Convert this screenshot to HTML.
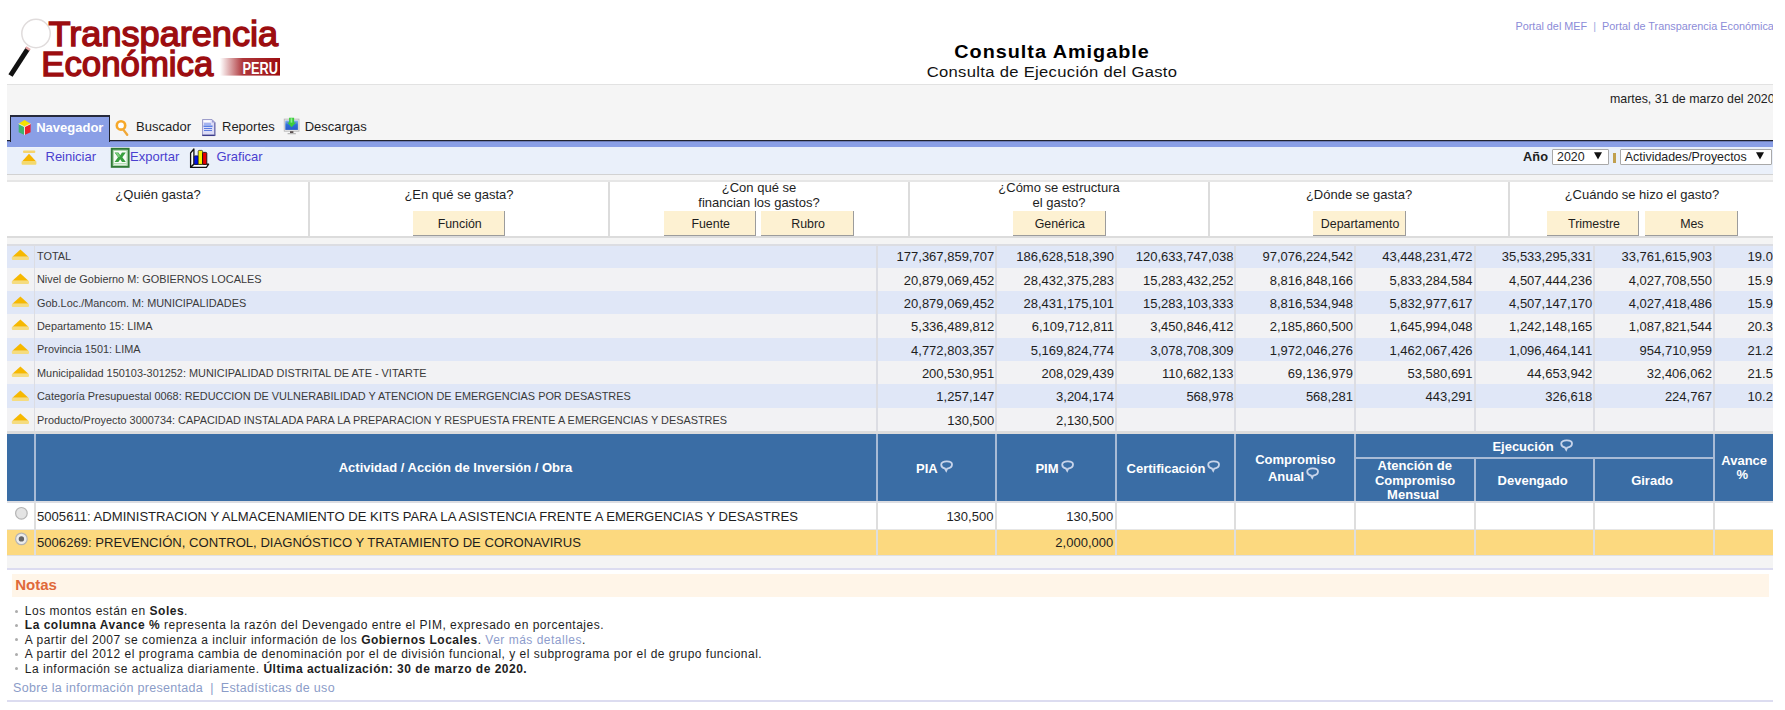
<!DOCTYPE html>
<html><head><meta charset="utf-8">
<style>
*{margin:0;padding:0;box-sizing:border-box}
html,body{width:1785px;height:710px;overflow:hidden;background:#fff;font-family:"Liberation Sans",sans-serif;color:#222}
#pg{position:absolute;left:0;top:0;width:1773px;height:710px;overflow:hidden}
.a{position:absolute}
.t,.r,.c{position:absolute;white-space:nowrap;line-height:1}
.r{text-align:right}
.c{text-align:center}
.btn{position:absolute;background:#fdf1d2;border-right:1px solid #9c9c9c;border-bottom:1px solid #9c9c9c}
b{font-weight:bold}
</style></head><body><div id="pg">
<svg class="a" style="left:0px;top:0px" width="300" height="84" viewBox="0 0 300 84">
 <defs><linearGradient id="pg1" x1="0" x2="1" y1="0" y2="0"><stop offset="0" stop-color="#a01318" stop-opacity="0"/><stop offset="0.38" stop-color="#a01318" stop-opacity="0.85"/><stop offset="1" stop-color="#9c0d10"/></linearGradient></defs>
 <circle cx="36" cy="33.5" r="14.2" fill="#fff" stroke="#e0dcdc" stroke-width="1.5"/>
 <line x1="28" y1="48.5" x2="10.5" y2="75.5" stroke="#111" stroke-width="5"/>
 <line x1="28.6" y1="47.6" x2="27.3" y2="49.6" stroke="#e6a4a4" stroke-width="5"/>
 <text x="48.6" y="46.1" font-family="Liberation Sans" font-size="34.4" fill="#9c0d10" stroke="#9c0d10" stroke-width="1.4" textLength="229.5" lengthAdjust="spacingAndGlyphs">Transparencia</text>
 <text x="41.3" y="75.5" font-family="Liberation Sans" font-size="34.2" fill="#9c0d10" stroke="#9c0d10" stroke-width="1.4" textLength="172" lengthAdjust="spacingAndGlyphs">Económica</text>
 <rect x="220" y="58" width="60" height="17.6" fill="url(#pg1)"/>
 <text x="242.5" y="73.5" font-family="Liberation Sans" font-weight="bold" font-size="16" fill="#fff" textLength="35.5" lengthAdjust="spacingAndGlyphs">PERU</text>
</svg>
<div class="c" style="left:852.00px;top:42.86px;width:400px;font-size:18px;font-weight:bold;color:#000;letter-spacing:0.9px;transform:scaleX(1.1)">Consulta Amigable</div>
<div class="c" style="left:852.00px;top:63.98px;width:400px;font-size:15.5px;color:#111;letter-spacing:0.3px;transform:scaleX(1.07)">Consulta de Ejecuci&oacute;n del Gasto</div>
<div class="t" style="left:1515.50px;top:20.82px;font-size:10.85px;color:#8c8cd8">Portal del MEF&nbsp; <span style="color:#9aa6e0">|</span>&nbsp; Portal de Transparencia Econ&oacute;mica</div>
<div class="a" style="left:7px;top:84px;width:1766px;height:56px;background:#f5f5f5;border-top:1px solid #e2e2e2"></div>
<div class="t" style="left:1610.00px;top:93.20px;font-size:12.4px;color:#222">martes, 31 de marzo del 2020</div>
<div class="a" style="left:7px;top:140px;width:1766px;height:1px;background:#20222e"></div>
<div class="a" style="left:7px;top:141px;width:1766px;height:1px;background:#6c7cb8"></div>
<div class="a" style="left:7px;top:142px;width:1766px;height:5px;background:#8a9fe6"></div>
<div class="a" style="left:10px;top:115px;width:100px;height:27px;background:#8a9fe6;border:1px solid #20222e;border-top:2px solid #262a3c;border-bottom:none"></div>
<div class="a" style="left:11px;top:139px;width:98px;height:9px;background:#8a9fe6"></div>
<div class="a" style="left:7px;top:147px;width:1766px;height:28px;background:#eaf0fa;border-bottom:1px solid #d2d2d2"></div>
<div class="a" style="left:16px;top:147px;width:249px;height:1px;background:#eff3fb"></div>
<div class="t" style="left:36.20px;top:121.10px;font-size:13px;font-weight:bold;color:#fff">Navegador</div>
<div class="t" style="left:136.10px;top:120.20px;font-size:13px;color:#1e1e1e">Buscador</div>
<div class="t" style="left:222.00px;top:120.20px;font-size:13px;color:#1e1e1e">Reportes</div>
<div class="t" style="left:304.70px;top:120.20px;font-size:13px;color:#1e1e1e">Descargas</div>
<div class="t" style="left:45.50px;top:149.80px;font-size:13px;color:#4a40cf">Reiniciar</div>
<div class="t" style="left:130.10px;top:149.80px;font-size:13px;color:#4a40cf">Exportar</div>
<div class="t" style="left:216.40px;top:149.80px;font-size:13px;color:#4a40cf">Graficar</div>
<svg class="a" style="left:16px;top:118px" width="18" height="19" viewBox="0 0 18 19">
<polygon points="8.5,2 14.6,5.8 8.5,8.8 2.7,5.8" fill="#f4e000"/>
<polygon points="2.7,5.8 8.5,8.8 8.5,17.1 2.7,14.2" fill="#3db46d"/>
<polygon points="14.6,5.8 8.5,8.8 8.5,17.1 14.6,14.2" fill="#ea1f2a"/>
<polyline points="2.7,5.8 8.5,8.8 14.6,5.8" fill="none" stroke="#fff" stroke-width="0.8"/>
<line x1="8.5" y1="8.8" x2="8.5" y2="17.1" stroke="#fff" stroke-width="0.8"/>
</svg>
<svg class="a" style="left:112px;top:118px" width="20" height="20" viewBox="0 0 20 20">
<circle cx="9" cy="7.4" r="4.2" fill="#fff" stroke="#f6a82a" stroke-width="2.6"/>
<line x1="11.3" y1="11.6" x2="15.2" y2="16.8" stroke="#f0a838" stroke-width="2.4" stroke-linecap="round"/>
</svg>
<svg class="a" style="left:200px;top:117px" width="18" height="20" viewBox="0 0 18 20">
<path d="M2.5,2.5 H12 L15,5.5 V18.6 H2.5 Z" fill="#dcdcf6" stroke="#8a8ac0" stroke-width="0.8"/>
<path d="M12,2.5 V5.5 H15" fill="#9a9ad0"/>
<rect x="2.3" y="17.6" width="12.9" height="1.4" fill="#3c3c8a"/>
<rect x="14.2" y="5.5" width="1.1" height="13" fill="#6a6aa8"/>
<rect x="3.5" y="3.3" width="7" height="1.6" fill="#fff"/>
<rect x="4" y="6.5" width="7" height="1" fill="#6a8ae8"/>
<rect x="3.5" y="8.6" width="9" height="1.2" fill="#3a6ae0"/>
<rect x="4" y="11" width="8" height="1" fill="#5a7ae0"/>
<rect x="4" y="13" width="8" height="1" fill="#5a7ae0"/>
</svg>
<svg class="a" style="left:282px;top:116px" width="20" height="20" viewBox="0 0 20 20">
<defs><linearGradient id="scr" x1="0" x2="0" y1="0" y2="1"><stop offset="0" stop-color="#8ab4f0"/><stop offset="0.45" stop-color="#2f6fd8"/><stop offset="1" stop-color="#2a5cc8"/></linearGradient></defs>
<rect x="2.2" y="3.1" width="14.8" height="12.1" fill="#ececec" stroke="#b4b4b4" stroke-width="0.8"/>
<rect x="3.3" y="4.5" width="12.6" height="9.4" fill="url(#scr)"/>
<rect x="8" y="15.2" width="3.4" height="1.8" fill="#5a5050"/>
<rect x="5.6" y="17" width="8.2" height="1.3" fill="#b8b8b8"/>
<path d="M7.1,1.8 H12.1 V6.6 H14.1 L9.6,11.2 L5.2,6.6 H7.1 Z" fill="#3ccc3c"/>
<rect x="8.6" y="2.2" width="1.7" height="4.4" fill="#90f090"/>
</svg>
<svg class="a" style="left:18px;top:148px" width="22" height="20" viewBox="0 0 22 20">
<rect x="5" y="2.6" width="12.3" height="2.3" rx="1" fill="#f6d46c"/>
<polygon points="11,5.8 17.7,13 4.5,13" fill="#f6b400"/>
<rect x="3.6" y="13" width="14.8" height="3.7" rx="0.8" fill="#f4d96e"/>
</svg>
<svg class="a" style="left:109px;top:146px" width="22" height="23" viewBox="0 0 22 23">
<rect x="2.8" y="2.8" width="16.8" height="18" fill="#e4f2e4" stroke="#2f7a35" stroke-width="2"/>
<rect x="4.4" y="4.4" width="13.6" height="14.8" fill="#f8fcf8" stroke="#9ccc9c" stroke-width="0.8"/>
<path d="M5.6,6.4 L9.4,6.4 L11.2,9.2 L13,6.4 L16.8,6.4 L13.4,11.2 L16.8,16 L13,16 L11.2,13.2 L9.4,16 L5.6,16 L9,11.2 Z" fill="#39a040"/>
<path d="M6.6,7 L9,7 L11.2,10.2 L9.4,11.2 Z" fill="#7ccf7c"/>
<line x1="5" y1="17.6" x2="17.5" y2="17.6" stroke="#a8d8a8" stroke-width="0.9"/>
</svg>
<svg class="a" style="left:188px;top:146px" width="22" height="23" viewBox="0 0 22 23">
<path d="M2.6,7 L5.9,3 L5.9,18.2 L2.6,21.4 Z" fill="#fff" stroke="#111" stroke-width="1.3" stroke-linejoin="round"/>
<path d="M2.6,21.4 L5.9,18.2 L20.6,18.2 L18.4,21.4 Z" fill="#fff" stroke="#111" stroke-width="1.3" stroke-linejoin="round"/>
<rect x="6.2" y="9.8" width="4.2" height="8.6" rx="1" fill="#0010e8" stroke="#111" stroke-width="0.6"/>
<rect x="10.2" y="4.4" width="4.4" height="14" rx="1" fill="#f4f000" stroke="#111" stroke-width="0.7"/>
<rect x="14.6" y="6.4" width="4.2" height="12" rx="1" fill="#e80000" stroke="#111" stroke-width="0.9"/>
</svg>
<div class="t" style="left:1523.10px;top:150.76px;font-size:12.8px;font-weight:bold;color:#1e1e1e">A&ntilde;o</div>
<div class="a" style="left:1552px;top:149px;width:57px;height:16px;background:#fff;border:1px solid #a9a9a9;border-radius:1px"></div>
<div class="t" style="left:1557.00px;top:151.10px;font-size:12.4px;color:#1e1e1e">2020</div>
<svg class="a" style="left:1593px;top:151px" width="10" height="10" viewBox="0 0 10 10"><polygon points="1,1.2 9,1.2 5,8.4" fill="#111"/></svg>
<div class="a" style="left:1613px;top:153px;width:3px;height:10px;background:#c0a050"></div>
<div class="a" style="left:1620px;top:149px;width:152px;height:16px;background:#fff;border:1px solid #a9a9a9;border-radius:1px"></div>
<div class="t" style="left:1624.80px;top:151.10px;font-size:12.4px;color:#1e1e1e">Actividades/Proyectos</div>
<svg class="a" style="left:1755.2px;top:151px" width="10" height="10" viewBox="0 0 10 10"><polygon points="1,1.2 9,1.2 5,8.4" fill="#111"/></svg>
<div class="a" style="left:7px;top:175px;width:1766px;height:69px;background:#f4f4f4"></div>
<div class="a" style="left:7px;top:180px;width:1766px;height:58px;background:#fff;border-top:2px solid #e6e6e6;border-bottom:2px solid #dcdcdc"></div>
<div class="a" style="left:308px;top:182px;width:2px;height:54px;background:#dcdcdc"></div>
<div class="a" style="left:608px;top:182px;width:2px;height:54px;background:#dcdcdc"></div>
<div class="a" style="left:908px;top:182px;width:2px;height:54px;background:#dcdcdc"></div>
<div class="a" style="left:1208px;top:182px;width:2px;height:54px;background:#dcdcdc"></div>
<div class="a" style="left:1508px;top:182px;width:2px;height:54px;background:#dcdcdc"></div>
<div class="c" style="left:-42.00px;top:188.40px;width:400px;font-size:13px;color:#1e1e1e">&iquest;Qui&eacute;n gasta?</div>
<div class="c" style="left:259.00px;top:188.40px;width:400px;font-size:13px;color:#1e1e1e">&iquest;En qu&eacute; se gasta?</div>
<div class="c" style="left:559.00px;top:181.40px;width:400px;font-size:13px;color:#1e1e1e">&iquest;Con qu&eacute; se</div>
<div class="c" style="left:559.00px;top:195.90px;width:400px;font-size:13px;color:#1e1e1e">financian los gastos?</div>
<div class="c" style="left:859.00px;top:181.40px;width:400px;font-size:13px;color:#1e1e1e">&iquest;C&oacute;mo se estructura</div>
<div class="c" style="left:859.00px;top:195.90px;width:400px;font-size:13px;color:#1e1e1e">el gasto?</div>
<div class="c" style="left:1159.00px;top:188.40px;width:400px;font-size:13px;color:#1e1e1e">&iquest;D&oacute;nde se gasta?</div>
<div class="c" style="left:1442.00px;top:188.40px;width:400px;font-size:13px;color:#1e1e1e">&iquest;Cu&aacute;ndo se hizo el gasto?</div>
<div class="a" style="left:413px;top:211px;width:92px;height:25px;background:#fdf1d2;border-right:1px solid #9c9c9c;border-bottom:1px solid #9c9c9c"></div>
<div class="c" style="left:399.70px;top:218.30px;width:120px;font-size:12.4px;color:#1e1e1e">Funci&oacute;n</div>
<div class="a" style="left:664px;top:211px;width:92px;height:25px;background:#fdf1d2;border-right:1px solid #9c9c9c;border-bottom:1px solid #9c9c9c"></div>
<div class="c" style="left:650.70px;top:218.30px;width:120px;font-size:12.4px;color:#1e1e1e">Fuente</div>
<div class="a" style="left:761px;top:211px;width:93px;height:25px;background:#fdf1d2;border-right:1px solid #9c9c9c;border-bottom:1px solid #9c9c9c"></div>
<div class="c" style="left:748.15px;top:218.30px;width:120px;font-size:12.4px;color:#1e1e1e">Rubro</div>
<div class="a" style="left:1013px;top:211px;width:93px;height:25px;background:#fdf1d2;border-right:1px solid #9c9c9c;border-bottom:1px solid #9c9c9c"></div>
<div class="c" style="left:999.85px;top:218.30px;width:120px;font-size:12.4px;color:#1e1e1e">Gen&eacute;rica</div>
<div class="a" style="left:1313px;top:211px;width:93px;height:25px;background:#fdf1d2;border-right:1px solid #9c9c9c;border-bottom:1px solid #9c9c9c"></div>
<div class="c" style="left:1300.10px;top:218.30px;width:120px;font-size:12.4px;color:#1e1e1e">Departamento</div>
<div class="a" style="left:1547px;top:211px;width:92px;height:25px;background:#fdf1d2;border-right:1px solid #9c9c9c;border-bottom:1px solid #9c9c9c"></div>
<div class="c" style="left:1534.00px;top:218.30px;width:120px;font-size:12.4px;color:#1e1e1e">Trimestre</div>
<div class="a" style="left:1645px;top:211px;width:93px;height:25px;background:#fdf1d2;border-right:1px solid #9c9c9c;border-bottom:1px solid #9c9c9c"></div>
<div class="c" style="left:1631.85px;top:218.30px;width:120px;font-size:12.4px;color:#1e1e1e">Mes</div>
<div class="a" style="left:7px;top:244px;width:1766px;height:24px;background:#e0e7f7"></div>
<div class="a" style="left:7px;top:268px;width:1766px;height:23px;background:#f2f2f4"></div>
<div class="a" style="left:7px;top:291px;width:1766px;height:23px;background:#e0e7f7"></div>
<div class="a" style="left:7px;top:314px;width:1766px;height:24px;background:#f2f2f4"></div>
<div class="a" style="left:7px;top:338px;width:1766px;height:23px;background:#e0e7f7"></div>
<div class="a" style="left:7px;top:361px;width:1766px;height:23px;background:#f2f2f4"></div>
<div class="a" style="left:7px;top:384px;width:1766px;height:24px;background:#e0e7f7"></div>
<div class="a" style="left:7px;top:408px;width:1766px;height:23px;background:#f2f2f4"></div>
<div class="t" style="left:37.00px;top:251.13px;font-size:10.9px;color:#3a3a3a">TOTAL</div>
<div class="r" style="left:876.20px;top:250.16px;width:118px;font-size:13.0px;color:#1e1e1e">177,367,859,707</div>
<div class="r" style="left:995.90px;top:250.16px;width:118px;font-size:13.0px;color:#1e1e1e">186,628,518,390</div>
<div class="r" style="left:1115.40px;top:250.16px;width:118px;font-size:13.0px;color:#1e1e1e">120,633,747,038</div>
<div class="r" style="left:1234.90px;top:250.16px;width:118px;font-size:13.0px;color:#1e1e1e">97,076,224,542</div>
<div class="r" style="left:1354.60px;top:250.16px;width:118px;font-size:13.0px;color:#1e1e1e">43,448,231,472</div>
<div class="r" style="left:1474.20px;top:250.16px;width:118px;font-size:13.0px;color:#1e1e1e">35,533,295,331</div>
<div class="r" style="left:1593.90px;top:250.16px;width:118px;font-size:13.0px;color:#1e1e1e">33,761,615,903</div>
<div class="r" style="left:1654.90px;top:250.16px;width:118px;font-size:13.0px;color:#1e1e1e">19.0</div>
<div class="t" style="left:37.00px;top:274.47px;font-size:10.9px;color:#3a3a3a">Nivel de Gobierno M: GOBIERNOS LOCALES</div>
<div class="r" style="left:876.20px;top:273.50px;width:118px;font-size:13.0px;color:#1e1e1e">20,879,069,452</div>
<div class="r" style="left:995.90px;top:273.50px;width:118px;font-size:13.0px;color:#1e1e1e">28,432,375,283</div>
<div class="r" style="left:1115.40px;top:273.50px;width:118px;font-size:13.0px;color:#1e1e1e">15,283,432,252</div>
<div class="r" style="left:1234.90px;top:273.50px;width:118px;font-size:13.0px;color:#1e1e1e">8,816,848,166</div>
<div class="r" style="left:1354.60px;top:273.50px;width:118px;font-size:13.0px;color:#1e1e1e">5,833,284,584</div>
<div class="r" style="left:1474.20px;top:273.50px;width:118px;font-size:13.0px;color:#1e1e1e">4,507,444,236</div>
<div class="r" style="left:1593.90px;top:273.50px;width:118px;font-size:13.0px;color:#1e1e1e">4,027,708,550</div>
<div class="r" style="left:1654.90px;top:273.50px;width:118px;font-size:13.0px;color:#1e1e1e">15.9</div>
<div class="t" style="left:37.00px;top:297.81px;font-size:10.9px;color:#3a3a3a">Gob.Loc./Mancom. M: MUNICIPALIDADES</div>
<div class="r" style="left:876.20px;top:296.84px;width:118px;font-size:13.0px;color:#1e1e1e">20,879,069,452</div>
<div class="r" style="left:995.90px;top:296.84px;width:118px;font-size:13.0px;color:#1e1e1e">28,431,175,101</div>
<div class="r" style="left:1115.40px;top:296.84px;width:118px;font-size:13.0px;color:#1e1e1e">15,283,103,333</div>
<div class="r" style="left:1234.90px;top:296.84px;width:118px;font-size:13.0px;color:#1e1e1e">8,816,534,948</div>
<div class="r" style="left:1354.60px;top:296.84px;width:118px;font-size:13.0px;color:#1e1e1e">5,832,977,617</div>
<div class="r" style="left:1474.20px;top:296.84px;width:118px;font-size:13.0px;color:#1e1e1e">4,507,147,170</div>
<div class="r" style="left:1593.90px;top:296.84px;width:118px;font-size:13.0px;color:#1e1e1e">4,027,418,486</div>
<div class="r" style="left:1654.90px;top:296.84px;width:118px;font-size:13.0px;color:#1e1e1e">15.9</div>
<div class="t" style="left:37.00px;top:321.15px;font-size:10.9px;color:#3a3a3a">Departamento 15: LIMA</div>
<div class="r" style="left:876.20px;top:320.18px;width:118px;font-size:13.0px;color:#1e1e1e">5,336,489,812</div>
<div class="r" style="left:995.90px;top:320.18px;width:118px;font-size:13.0px;color:#1e1e1e">6,109,712,811</div>
<div class="r" style="left:1115.40px;top:320.18px;width:118px;font-size:13.0px;color:#1e1e1e">3,450,846,412</div>
<div class="r" style="left:1234.90px;top:320.18px;width:118px;font-size:13.0px;color:#1e1e1e">2,185,860,500</div>
<div class="r" style="left:1354.60px;top:320.18px;width:118px;font-size:13.0px;color:#1e1e1e">1,645,994,048</div>
<div class="r" style="left:1474.20px;top:320.18px;width:118px;font-size:13.0px;color:#1e1e1e">1,242,148,165</div>
<div class="r" style="left:1593.90px;top:320.18px;width:118px;font-size:13.0px;color:#1e1e1e">1,087,821,544</div>
<div class="r" style="left:1654.90px;top:320.18px;width:118px;font-size:13.0px;color:#1e1e1e">20.3</div>
<div class="t" style="left:37.00px;top:344.49px;font-size:10.9px;color:#3a3a3a">Provincia 1501: LIMA</div>
<div class="r" style="left:876.20px;top:343.52px;width:118px;font-size:13.0px;color:#1e1e1e">4,772,803,357</div>
<div class="r" style="left:995.90px;top:343.52px;width:118px;font-size:13.0px;color:#1e1e1e">5,169,824,774</div>
<div class="r" style="left:1115.40px;top:343.52px;width:118px;font-size:13.0px;color:#1e1e1e">3,078,708,309</div>
<div class="r" style="left:1234.90px;top:343.52px;width:118px;font-size:13.0px;color:#1e1e1e">1,972,046,276</div>
<div class="r" style="left:1354.60px;top:343.52px;width:118px;font-size:13.0px;color:#1e1e1e">1,462,067,426</div>
<div class="r" style="left:1474.20px;top:343.52px;width:118px;font-size:13.0px;color:#1e1e1e">1,096,464,141</div>
<div class="r" style="left:1593.90px;top:343.52px;width:118px;font-size:13.0px;color:#1e1e1e">954,710,959</div>
<div class="r" style="left:1654.90px;top:343.52px;width:118px;font-size:13.0px;color:#1e1e1e">21.2</div>
<div class="t" style="left:37.00px;top:367.83px;font-size:10.9px;color:#3a3a3a">Municipalidad 150103-301252: MUNICIPALIDAD DISTRITAL DE ATE - VITARTE</div>
<div class="r" style="left:876.20px;top:366.86px;width:118px;font-size:13.0px;color:#1e1e1e">200,530,951</div>
<div class="r" style="left:995.90px;top:366.86px;width:118px;font-size:13.0px;color:#1e1e1e">208,029,439</div>
<div class="r" style="left:1115.40px;top:366.86px;width:118px;font-size:13.0px;color:#1e1e1e">110,682,133</div>
<div class="r" style="left:1234.90px;top:366.86px;width:118px;font-size:13.0px;color:#1e1e1e">69,136,979</div>
<div class="r" style="left:1354.60px;top:366.86px;width:118px;font-size:13.0px;color:#1e1e1e">53,580,691</div>
<div class="r" style="left:1474.20px;top:366.86px;width:118px;font-size:13.0px;color:#1e1e1e">44,653,942</div>
<div class="r" style="left:1593.90px;top:366.86px;width:118px;font-size:13.0px;color:#1e1e1e">32,406,062</div>
<div class="r" style="left:1654.90px;top:366.86px;width:118px;font-size:13.0px;color:#1e1e1e">21.5</div>
<div class="t" style="left:37.00px;top:391.17px;font-size:10.9px;color:#3a3a3a">Categor&iacute;a Presupuestal 0068: REDUCCION DE VULNERABILIDAD Y ATENCION DE EMERGENCIAS POR DESASTRES</div>
<div class="r" style="left:876.20px;top:390.20px;width:118px;font-size:13.0px;color:#1e1e1e">1,257,147</div>
<div class="r" style="left:995.90px;top:390.20px;width:118px;font-size:13.0px;color:#1e1e1e">3,204,174</div>
<div class="r" style="left:1115.40px;top:390.20px;width:118px;font-size:13.0px;color:#1e1e1e">568,978</div>
<div class="r" style="left:1234.90px;top:390.20px;width:118px;font-size:13.0px;color:#1e1e1e">568,281</div>
<div class="r" style="left:1354.60px;top:390.20px;width:118px;font-size:13.0px;color:#1e1e1e">443,291</div>
<div class="r" style="left:1474.20px;top:390.20px;width:118px;font-size:13.0px;color:#1e1e1e">326,618</div>
<div class="r" style="left:1593.90px;top:390.20px;width:118px;font-size:13.0px;color:#1e1e1e">224,767</div>
<div class="r" style="left:1654.90px;top:390.20px;width:118px;font-size:13.0px;color:#1e1e1e">10.2</div>
<div class="t" style="left:37.00px;top:414.51px;font-size:10.9px;color:#3a3a3a">Producto/Proyecto 3000734: CAPACIDAD INSTALADA PARA LA PREPARACION Y RESPUESTA FRENTE A EMERGENCIAS Y DESASTRES</div>
<div class="r" style="left:876.20px;top:413.54px;width:118px;font-size:13.0px;color:#1e1e1e">130,500</div>
<div class="r" style="left:995.90px;top:413.54px;width:118px;font-size:13.0px;color:#1e1e1e">2,130,500</div>
<div class="a" style="left:34px;top:244px;width:1px;height:187px;background:#dcdde3"></div>
<div class="a" style="left:876px;top:244px;width:2px;height:187px;background:#dcdde3"></div>
<div class="a" style="left:995px;top:244px;width:2px;height:187px;background:#dcdde3"></div>
<div class="a" style="left:1115px;top:244px;width:2px;height:187px;background:#dcdde3"></div>
<div class="a" style="left:1234px;top:244px;width:2px;height:187px;background:#dcdde3"></div>
<div class="a" style="left:1354px;top:244px;width:2px;height:187px;background:#dcdde3"></div>
<div class="a" style="left:1474px;top:244px;width:2px;height:187px;background:#dcdde3"></div>
<div class="a" style="left:1593px;top:244px;width:2px;height:187px;background:#dcdde3"></div>
<div class="a" style="left:1713px;top:244px;width:2px;height:187px;background:#dcdde3"></div>
<svg class="a" style="left:11px;top:244.46px" width="19" height="18" viewBox="0 0 19 18"><polygon points="9.4,5.6 17.4,12.8 1.4,12.8" fill="#f6b800"/><rect x="0.8" y="12.8" width="17.2" height="3.2" rx="1" fill="#f5dc80"/></svg>
<svg class="a" style="left:11px;top:267.8px" width="19" height="18" viewBox="0 0 19 18"><polygon points="9.4,5.6 17.4,12.8 1.4,12.8" fill="#f6b800"/><rect x="0.8" y="12.8" width="17.2" height="3.2" rx="1" fill="#f5dc80"/></svg>
<svg class="a" style="left:11px;top:291.14px" width="19" height="18" viewBox="0 0 19 18"><polygon points="9.4,5.6 17.4,12.8 1.4,12.8" fill="#f6b800"/><rect x="0.8" y="12.8" width="17.2" height="3.2" rx="1" fill="#f5dc80"/></svg>
<svg class="a" style="left:11px;top:314.48px" width="19" height="18" viewBox="0 0 19 18"><polygon points="9.4,5.6 17.4,12.8 1.4,12.8" fill="#f6b800"/><rect x="0.8" y="12.8" width="17.2" height="3.2" rx="1" fill="#f5dc80"/></svg>
<svg class="a" style="left:11px;top:337.82px" width="19" height="18" viewBox="0 0 19 18"><polygon points="9.4,5.6 17.4,12.8 1.4,12.8" fill="#f6b800"/><rect x="0.8" y="12.8" width="17.2" height="3.2" rx="1" fill="#f5dc80"/></svg>
<svg class="a" style="left:11px;top:361.16px" width="19" height="18" viewBox="0 0 19 18"><polygon points="9.4,5.6 17.4,12.8 1.4,12.8" fill="#f6b800"/><rect x="0.8" y="12.8" width="17.2" height="3.2" rx="1" fill="#f5dc80"/></svg>
<svg class="a" style="left:11px;top:384.5px" width="19" height="18" viewBox="0 0 19 18"><polygon points="9.4,5.6 17.4,12.8 1.4,12.8" fill="#f6b800"/><rect x="0.8" y="12.8" width="17.2" height="3.2" rx="1" fill="#f5dc80"/></svg>
<svg class="a" style="left:11px;top:407.84px" width="19" height="18" viewBox="0 0 19 18"><polygon points="9.4,5.6 17.4,12.8 1.4,12.8" fill="#f6b800"/><rect x="0.8" y="12.8" width="17.2" height="3.2" rx="1" fill="#f5dc80"/></svg>
<div class="a" style="left:7px;top:431px;width:1766px;height:3px;background:#dcdcdc"></div>
<div class="a" style="left:7px;top:244px;width:1766px;height:2px;background:#dcdde2"></div>
<div class="a" style="left:7px;top:434px;width:1766px;height:67px;background:#3a6da5"></div>
<div class="a" style="left:34px;top:434px;width:2px;height:67px;background:#a8bbd6"></div>
<div class="a" style="left:876px;top:434px;width:2px;height:67px;background:#a8bbd6"></div>
<div class="a" style="left:995px;top:434px;width:2px;height:67px;background:#a8bbd6"></div>
<div class="a" style="left:1115px;top:434px;width:2px;height:67px;background:#a8bbd6"></div>
<div class="a" style="left:1234px;top:434px;width:2px;height:67px;background:#a8bbd6"></div>
<div class="a" style="left:1354px;top:434px;width:2px;height:67px;background:#a8bbd6"></div>
<div class="a" style="left:1474px;top:459px;width:2px;height:42px;background:#a8bbd6"></div>
<div class="a" style="left:1593px;top:459px;width:2px;height:42px;background:#a8bbd6"></div>
<div class="a" style="left:1713px;top:434px;width:2px;height:67px;background:#a8bbd6"></div>
<div class="a" style="left:1355px;top:457px;width:359px;height:2px;background:#a8bbd6"></div>
<div class="c" style="left:255.50px;top:461.00px;width:400px;font-size:13px;font-weight:bold;color:#fff">Actividad / Acci&oacute;n de Inversi&oacute;n / Obra</div>
<div class="t" style="left:916.00px;top:462.20px;font-size:13px;font-weight:bold;color:#fff">PIA</div>
<svg class="a" style="left:938.8px;top:459.4px" width="15" height="14" viewBox="0 0 15 14"><path d="M2.2,5.6 C2,1.6 12.6,1.2 13,5.2 C13.2,8.4 10.2,9.2 8.2,9.6 L7.2,11.8 L5.8,9.4 C3.6,9 2.3,8 2.2,5.6 Z" fill="none" stroke="#c8d4ea" stroke-width="1.8"/></svg>
<div class="t" style="left:1035.40px;top:462.20px;font-size:13px;font-weight:bold;color:#fff">PIM</div>
<svg class="a" style="left:1059.8px;top:459.4px" width="15" height="14" viewBox="0 0 15 14"><path d="M2.2,5.6 C2,1.6 12.6,1.2 13,5.2 C13.2,8.4 10.2,9.2 8.2,9.6 L7.2,11.8 L5.8,9.4 C3.6,9 2.3,8 2.2,5.6 Z" fill="none" stroke="#c8d4ea" stroke-width="1.8"/></svg>
<div class="t" style="left:1126.60px;top:462.20px;font-size:13px;font-weight:bold;color:#fff">Certificaci&oacute;n</div>
<svg class="a" style="left:1206.1px;top:459.4px" width="15" height="14" viewBox="0 0 15 14"><path d="M2.2,5.6 C2,1.6 12.6,1.2 13,5.2 C13.2,8.4 10.2,9.2 8.2,9.6 L7.2,11.8 L5.8,9.4 C3.6,9 2.3,8 2.2,5.6 Z" fill="none" stroke="#c8d4ea" stroke-width="1.8"/></svg>
<div class="c" style="left:1195.30px;top:453.20px;width:200px;font-size:13px;font-weight:bold;color:#fff">Compromiso</div>
<div class="c" style="left:1186.00px;top:470.20px;width:200px;font-size:13px;font-weight:bold;color:#fff">Anual</div>
<svg class="a" style="left:1305.3px;top:465.8px" width="15" height="14" viewBox="0 0 15 14"><path d="M2.2,5.6 C2,1.6 12.6,1.2 13,5.2 C13.2,8.4 10.2,9.2 8.2,9.6 L7.2,11.8 L5.8,9.4 C3.6,9 2.3,8 2.2,5.6 Z" fill="none" stroke="#c8d4ea" stroke-width="1.8"/></svg>
<div class="c" style="left:1423.10px;top:440.00px;width:200px;font-size:13px;font-weight:bold;color:#fff">Ejecuci&oacute;n</div>
<svg class="a" style="left:1558.8px;top:437.8px" width="15" height="14" viewBox="0 0 15 14"><path d="M2.2,5.6 C2,1.6 12.6,1.2 13,5.2 C13.2,8.4 10.2,9.2 8.2,9.6 L7.2,11.8 L5.8,9.4 C3.6,9 2.3,8 2.2,5.6 Z" fill="none" stroke="#c8d4ea" stroke-width="1.8"/></svg>
<div class="c" style="left:1314.80px;top:459.40px;width:200px;font-size:13px;font-weight:bold;color:#fff">Atenci&oacute;n de</div>
<div class="c" style="left:1315.00px;top:473.90px;width:200px;font-size:13px;font-weight:bold;color:#fff">Compromiso</div>
<div class="c" style="left:1313.10px;top:487.90px;width:200px;font-size:13px;font-weight:bold;color:#fff">Mensual</div>
<div class="c" style="left:1432.60px;top:473.90px;width:200px;font-size:13px;font-weight:bold;color:#fff">Devengado</div>
<div class="c" style="left:1552.10px;top:473.90px;width:200px;font-size:13px;font-weight:bold;color:#fff">Girado</div>
<div class="c" style="left:1644.20px;top:454.30px;width:200px;font-size:13px;font-weight:bold;color:#fff">Avance</div>
<div class="c" style="left:1642.30px;top:468.00px;width:200px;font-size:13px;font-weight:bold;color:#fff">%</div>
<div class="a" style="left:7px;top:501px;width:1766px;height:28px;background:#fff;border-top:2px solid #dcdde2"></div>
<div class="a" style="left:7px;top:529px;width:1766px;height:26px;background:#fcd97f;border-top:1px solid #e6e6e6"></div>
<div class="a" style="left:7px;top:555px;width:1766px;height:15px;background:#f4f4f4;border-top:1px solid #e0e0e0;border-bottom:2px solid #dcdcf0"></div>
<div class="a" style="left:34px;top:503px;width:2px;height:52px;background:#dedede"></div>
<div class="a" style="left:876px;top:503px;width:2px;height:52px;background:#dedede"></div>
<div class="a" style="left:995px;top:503px;width:2px;height:52px;background:#dedede"></div>
<div class="a" style="left:1115px;top:503px;width:2px;height:52px;background:#dedede"></div>
<div class="a" style="left:1234px;top:503px;width:2px;height:52px;background:#dedede"></div>
<div class="a" style="left:1354px;top:503px;width:2px;height:52px;background:#dedede"></div>
<div class="a" style="left:1474px;top:503px;width:2px;height:52px;background:#dedede"></div>
<div class="a" style="left:1593px;top:503px;width:2px;height:52px;background:#dedede"></div>
<div class="a" style="left:1713px;top:503px;width:2px;height:52px;background:#dedede"></div>
<div class="t" style="left:37.00px;top:509.91px;font-size:13.1px;color:#1e1e1e">5005611: ADMINISTRACION Y ALMACENAMIENTO DE KITS PARA LA ASISTENCIA FRENTE A EMERGENCIAS Y DESASTRES</div>
<div class="t" style="left:37.00px;top:535.91px;font-size:13.1px;color:#1e1e1e">5006269: PREVENCI&Oacute;N, CONTROL, DIAGN&Oacute;STICO Y TRATAMIENTO DE CORONAVIRUS</div>
<div class="r" style="left:883.40px;top:510.00px;width:110px;font-size:13px;color:#1e1e1e">130,500</div>
<div class="r" style="left:1003.20px;top:510.00px;width:110px;font-size:13px;color:#1e1e1e">130,500</div>
<div class="r" style="left:1003.20px;top:535.60px;width:110px;font-size:13px;color:#1e1e1e">2,000,000</div>
<svg class="a" style="left:14px;top:506px" width="15" height="15" viewBox="0 0 15 15"><circle cx="7.4" cy="7.3" r="5.8" fill="#e4e4e4" stroke="#b4b4b4" stroke-width="1.2"/></svg>
<svg class="a" style="left:14px;top:532px" width="15" height="15" viewBox="0 0 15 15"><circle cx="7.4" cy="6.9" r="5.8" fill="#ececec" stroke="#b4b4b4" stroke-width="1.2"/><circle cx="7.4" cy="6.9" r="2.7" fill="#646464"/></svg>
<div class="a" style="left:12px;top:574px;width:1757px;height:23px;background:#fff5e8"></div>
<div class="t" style="left:15.20px;top:577.30px;font-size:15px;font-weight:bold;color:#e0693a">Notas</div>
<div class="a" style="left:15px;top:610px;width:3px;height:3px;background:#acacac;border-radius:50%"></div>
<div class="t" style="left:24.80px;top:604.94px;font-size:12px;color:#1e1e1e;letter-spacing:0.5px">Los montos est&aacute;n en <b>Soles</b>.</div>
<div class="a" style="left:15px;top:624px;width:3px;height:3px;background:#acacac;border-radius:50%"></div>
<div class="t" style="left:24.80px;top:619.34px;font-size:12px;color:#1e1e1e;letter-spacing:0.5px"><b>La columna Avance %</b> representa la raz&oacute;n del Devengado entre el PIM, expresado en porcentajes.</div>
<div class="a" style="left:15px;top:638px;width:3px;height:3px;background:#acacac;border-radius:50%"></div>
<div class="t" style="left:24.80px;top:633.74px;font-size:12px;color:#1e1e1e;letter-spacing:0.5px">A partir del 2007 se comienza a incluir informaci&oacute;n de los <b>Gobiernos Locales</b>. <span style="color:#8d9ccc">Ver m&aacute;s detalles</span>.</div>
<div class="a" style="left:15px;top:653px;width:3px;height:3px;background:#acacac;border-radius:50%"></div>
<div class="t" style="left:24.80px;top:648.14px;font-size:12px;color:#1e1e1e;letter-spacing:0.5px">A partir del 2012 el programa cambia de denominaci&oacute;n por el de divisi&oacute;n funcional, y el subprograma por el de grupo funcional.</div>
<div class="a" style="left:15px;top:667px;width:3px;height:3px;background:#acacac;border-radius:50%"></div>
<div class="t" style="left:24.80px;top:662.54px;font-size:12px;color:#1e1e1e;letter-spacing:0.5px">La informaci&oacute;n se actualiza diariamente. <b>&Uacute;ltima actualizaci&oacute;n: 30 de marzo de 2020.</b></div>
<div class="t" style="left:13.10px;top:682.02px;font-size:12.5px;color:#8b9cc8;letter-spacing:0.3px">Sobre la informaci&oacute;n presentada <span style="letter-spacing:0">&nbsp;|&nbsp;</span> Estad&iacute;sticas de uso</div>
<div class="a" style="left:7px;top:700px;width:1766px;height:2px;background:#dcdcf0"></div>
</div></body></html>
